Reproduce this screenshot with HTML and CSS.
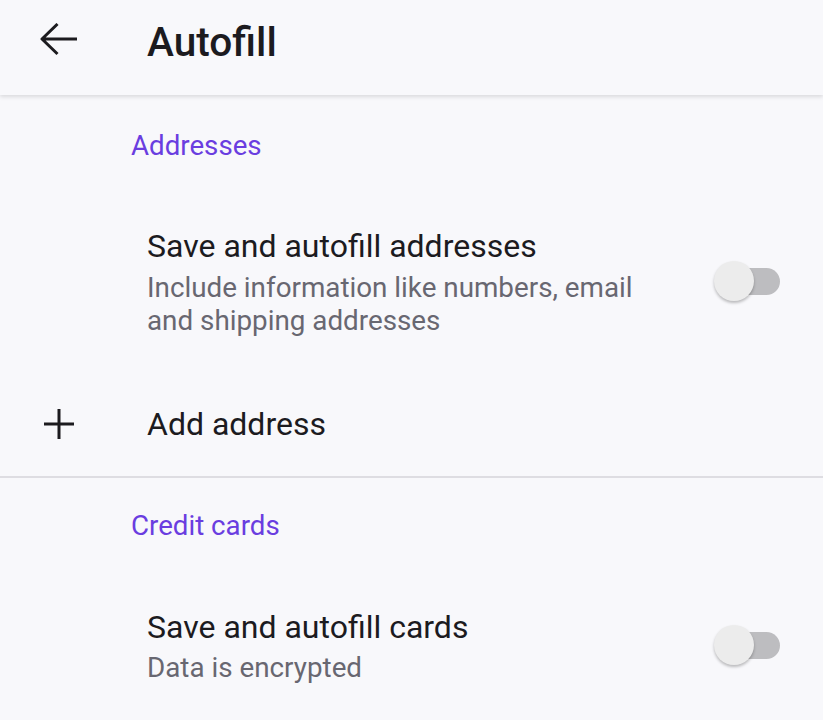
FILE: index.html
```html
<!DOCTYPE html>
<html lang="en">
<head>
  <meta charset="UTF-8">
  <title>Autofill</title>
  <link rel="stylesheet" href="styles.css">
</head>
<body>
<div class="toolbar">
  <span class="toolbar-icon">
    <svg width="38" height="34" viewBox="0 0 38 34">
      <path d="M37 16H2M17.5 1L2 16l15.5 15" fill="none" stroke="#1c1b1f" stroke-width="3" stroke-linejoin="round"/>
    </svg>
  </span>
  <h1 class="toolbar-title">Autofill</h1>
</div>

<div class="category">Addresses</div>

<div class="pref">
  <div class="pref-text">
    <div class="pref-title">Save and autofill addresses</div>
    <div class="pref-summary">Include information like numbers, email and shipping addresses</div>
  </div>
  <div class="switch"><span class="thumb"></span></div>
</div>

<div class="pref pref-action">
  <span class="pref-icon">
    <svg width="32" height="32" viewBox="0 0 32 32">
      <path d="M16 1v30M1 16h30" fill="none" stroke="#1c1b1f" stroke-width="3"/>
    </svg>
  </span>
  <div class="pref-title">Add address</div>
</div>

<div class="divider"></div>

<div class="category category-second">Credit cards</div>

<div class="pref pref-cards">
  <div class="pref-text">
    <div class="pref-title">Save and autofill cards</div>
    <div class="pref-summary">Data is encrypted</div>
  </div>
  <div class="switch"><span class="thumb"></span></div>
</div>
</body>
</html>
```

FILE: styles.css
```css
* {
  margin: 0;
  padding: 0;
  box-sizing: border-box;
}

body {
  background: #f8f8fb;
  font-family: Roboto, "Noto Sans", sans-serif;
  color: #1c1b1f;
  width: 823px;
  height: 720px;
  overflow: hidden;
}

/* top bar */
.toolbar {
  height: 95px;
  display: flex;
  align-items: center;
  padding-left: 40px;
  background: #f8f8fb;
  box-shadow: 0 2px 4px rgba(0, 0, 0, 0.12);
  position: relative;
}

.toolbar-icon {
  display: flex;
  width: 107px;
  margin-top: -15px;
}

.toolbar-title {
  font-size: 40.6px;
  font-weight: 500;
  line-height: 48px;
  margin-top: -12px;
}

/* section header */
.category {
  color: #6a3de0;
  font-size: 27.7px;
  line-height: 32px;
  padding: 35px 0 0 131px;
}

.category-second {
  padding-top: 31.5px;
}

/* rows */
.pref {
  display: flex;
  align-items: center;
  padding: 64px 43px 0 147px;
}

.pref-text {
  flex: 1;
}

.pref-title {
  font-size: 32px;
  line-height: 40px;
}

.pref-summary {
  font-size: 27.8px;
  line-height: 33px;
  color: #686771;
  width: 510px;
  margin-top: 5px;
}

.pref-action {
  padding: 67px 0 0 43px;
}

.pref-action .pref-title {
  margin-left: 72px;
}

.pref-icon {
  display: flex;
}

.pref-cards {
  padding-top: 65.5px;
}

.pref-cards .pref-summary {
  margin-top: 4px;
}

.divider {
  height: 2px;
  background: #dedde2;
  margin-top: 32px;
}

/* toggle */
.switch {
  width: 60px;
  height: 27px;
  border-radius: 14px;
  background: #bdbdc0;
  position: relative;
  margin-left: 20px;
}

.thumb {
  position: absolute;
  left: -6px;
  top: -7px;
  width: 40px;
  height: 40px;
  border-radius: 50%;
  background: #ececec;
  box-shadow: 0 2px 3px rgba(0, 0, 0, 0.25);
}
```
